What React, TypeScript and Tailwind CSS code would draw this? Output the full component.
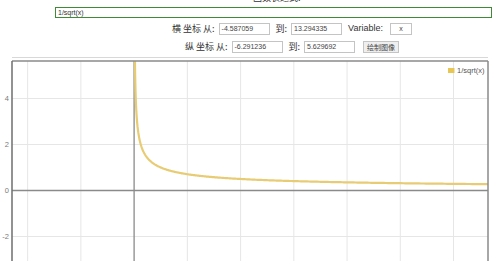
import React from "react";

const X_MIN = -4.587059;
const X_MAX = 13.294335;
const Y_MIN = -6.291236;
const Y_MAX = 5.629692;

const LEFT = 12;
const RIGHT = 488;
const TOP = 3;
const SCALE_X = (RIGHT - LEFT) / (X_MAX - X_MIN);
const SCALE_Y = 23.0;

const px = (x: number) => LEFT + (x - X_MIN) * SCALE_X;
const py = (y: number) => TOP + (Y_MAX - y) * SCALE_Y;

const Field: React.FC<{ value: string; w: string }> = ({ value, w }) => (
  <div
    className={`${w} h-[12px] border border-[#c4c4c4] bg-white px-[2px] text-[7px] leading-[10px] text-[#444]`}
  >
    {value}
  </div>
);

const Chart: React.FC = () => {
  const pts: string[] = [];
  const x0 = 1 / (Y_MAX * Y_MAX);
  for (let i = 0; i <= 400; i++) {
    const t = i / 400;
    const x = x0 + Math.pow(t, 3) * (X_MAX - x0);
    pts.push(`${px(x).toFixed(2)},${py(1 / Math.sqrt(x)).toFixed(2)}`);
  }
  const vx = [-4, -2, 2, 4, 6, 8, 10, 12];
  const hy = [4, 2, -2];

  return (
    <svg width={500} height={204} className="block">
      <defs>
        <clipPath id="plot">
          <rect x={LEFT} y={TOP} width={RIGHT - LEFT} height={220} />
        </clipPath>
      </defs>
      {vx.map((v) => (
        <line key={v} x1={px(v)} x2={px(v)} y1={TOP} y2={204} stroke="#e6e6e6" strokeWidth={1} />
      ))}
      {hy.map((v) => (
        <line key={v} x1={LEFT} x2={RIGHT} y1={py(v)} y2={py(v)} stroke="#e6e6e6" strokeWidth={1} />
      ))}
      <line x1={LEFT} x2={RIGHT} y1={py(0)} y2={py(0)} stroke="#8a8a8a" strokeWidth={1.3} />
      <line x1={px(0)} x2={px(0)} y1={TOP} y2={204} stroke="#8a8a8a" strokeWidth={1.3} />
      <polyline
        points={pts.join(" ")}
        fill="none"
        stroke="#e8cc74"
        strokeWidth={2.2}
        clipPath="url(#plot)"
      />
      <line x1={LEFT} x2={RIGHT} y1={TOP} y2={TOP} stroke="#8a8a8a" strokeWidth={1.5} />
      <line x1={LEFT} x2={LEFT} y1={TOP} y2={204} stroke="#6e6e6e" strokeWidth={1.5} />
      <line x1={RIGHT} x2={RIGHT} y1={TOP} y2={204} stroke="#8a8a8a" strokeWidth={1.5} />
      {[4, 2, 0, -2].map((v) => (
        <text
          key={v}
          x={9}
          y={py(v) + 2.5}
          textAnchor="end"
          fontSize={7.5}
          fill="#7a7a7a"
          fontFamily="Liberation Sans, sans-serif"
        >
          {v}
        </text>
      ))}
      <rect x={448} y={10} width={6.5} height={5} fill="#e8c655" />
      <text x={457} y={15} fontSize={7.5} fill="#555" fontFamily="Liberation Sans, sans-serif">
        1/sqrt(x)
      </text>
    </svg>
  );
}

export default function App() {
  const cjk = "font-['Noto_Sans_CJK_SC',sans-serif]";
  return (
    <div className="w-[500px] h-[261px] overflow-hidden bg-white font-['Liberation_Sans','Noto_Sans_CJK_SC',sans-serif]">
      <div className={`-mt-[7px] h-[10px] pl-[253px] text-[9px] leading-[10px] text-[#333] ${cjk}`}>
        函数表达式:
      </div>
      <div className="mt-[4px] ml-[55px] w-[437px] h-[11px] border border-[#3f8a35] bg-white px-[2px] text-[7px] leading-[9px] text-[#333]">
        1/sqrt(x)
      </div>
      <div className="mt-[5px] h-[12px] flex items-center justify-center pl-[84px] gap-[4px] text-[9px] text-[#333]">
        <span className={cjk}>横 坐标 从:</span>
        <Field value="-4.587059" w="w-[51px]" />
        <span className={`ml-[2px] ${cjk}`}>到:</span>
        <Field value="13.294335" w="w-[51px]" />
        <span className="ml-[2px]">Variable:</span>
        <div className="ml-[3px] w-[22px] h-[12px] border border-[#c4c4c4] text-center text-[7px] leading-[10px] text-[#444]">
          x
        </div>
      </div>
      <div className="mt-[6px] h-[12px] flex items-center justify-center pl-[84px] gap-[4px] text-[9px] text-[#333]">
        <span className={cjk}>纵 坐标 从:</span>
        <Field value="-6.291236" w="w-[51px]" />
        <span className={`ml-[2px] ${cjk}`}>到:</span>
        <Field value="5.629692" w="w-[51px]" />
        <div className={`ml-[4px] h-[12px] px-[3px] border border-[#c4c4c4] bg-[#efefef] text-[7px] leading-[10px] text-[#444] ${cjk}`}>
          绘制图像
        </div>
      </div>
      <div className="mt-[4px] ml-[12px] w-[476px] border-t border-[#d8d8d8]" />
      <Chart />
    </div>
  );
}
